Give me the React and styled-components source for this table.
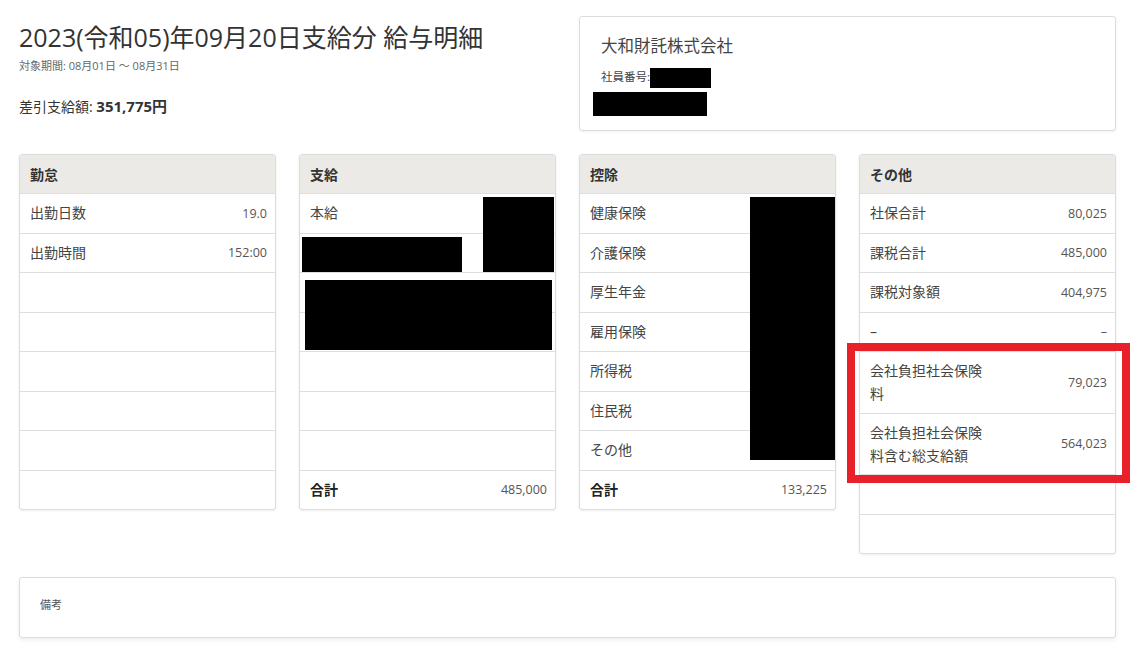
import React from 'react';
import styled, { createGlobalStyle } from 'styled-components';

const GlobalStyle = createGlobalStyle`
  body {
    margin: 0;
    background: #fff;
    font-family: "Open Sans", "Noto Sans CJK JP", sans-serif;
    color: #333;
  }
`;

const columns = [
  {
    title: '勤怠',
    rows: [
      { label: '出勤日数', value: '19.0' },
      { label: '出勤時間', value: '152:00' },
      {}, {}, {}, {}, {}, {},
    ],
  },
  {
    title: '支給',
    rows: [
      { label: '本給' },
      {}, {}, {}, {}, {}, {},
      { label: '合計', value: '485,000', total: true },
    ],
    redactions: [
      { left: 183, top: 42, width: 71, height: 75 },
      { left: 2, top: 82, width: 160, height: 35 },
      { left: 5, top: 125, width: 247, height: 70 },
    ],
  },
  {
    title: '控除',
    rows: [
      { label: '健康保険' },
      { label: '介護保険' },
      { label: '厚生年金' },
      { label: '雇用保険' },
      { label: '所得税' },
      { label: '住民税' },
      { label: 'その他' },
      { label: '合計', value: '133,225', total: true },
    ],
    redactions: [{ left: 170, top: 42, width: 85, height: 263 }],
  },
  {
    title: 'その他',
    rows: [
      { label: '社保合計', value: '80,025' },
      { label: '課税合計', value: '485,000' },
      { label: '課税対象額', value: '404,975' },
      { label: '–', value: '–' },
      { label: '会社負担社会保険料', value: '79,023', tall: true },
      { label: '会社負担社会保険料含む総支給額', value: '564,023', tall: true },
      {}, {},
    ],
    highlight: true,
  },
];

export default function App() {
  return (
    <Page>
      <GlobalStyle />
      <Top>
        <Summary>
          <Title>2023(令和05)年09月20日支給分 給与明細</Title>
          <Period>対象期間: 08月01日 〜 08月31日</Period>
          <NetPay>
            差引支給額: <strong>351,775円</strong>
          </NetPay>
        </Summary>
        <CompanyCard>
          <CompanyName>大和財託株式会社</CompanyName>
          <EmployeeNo>社員番号:</EmployeeNo>
          <Redact style={{ left: 70, top: 51, width: 61, height: 20 }} />
          <Redact style={{ left: 13, top: 75, width: 114, height: 24 }} />
        </CompanyCard>
      </Top>

      <Grid>
        {columns.map((col) => (
          <Card key={col.title}>
            <Header>{col.title}</Header>
            {col.rows.map((row, i) => (
              <Row key={i} $tall={row.tall}>
                <Label $total={row.total} $tall={row.tall}>{row.label}</Label>
                <Value>{row.value}</Value>
              </Row>
            ))}
            {(col.redactions || []).map((r, i) => (
              <Redact key={i} style={r} />
            ))}
            {col.highlight && <Highlight />}
          </Card>
        ))}
      </Grid>

      <Remarks>
        <RemarksLabel>備考</RemarksLabel>
      </Remarks>
    </Page>
  );
}

const Page = styled.div`
  width: 1135px;
  padding: 16px 19px 30px;
  box-sizing: border-box;
`;

const Top = styled.div`
  display: flex;
  align-items: flex-start;
  justify-content: space-between;
`;

const Summary = styled.div`
  padding-top: 5px;
`;

const Title = styled.h1`
  margin: 0;
  font-size: 25px;
  font-weight: 400;
  line-height: 32px;
  color: #333;
`;

const Period = styled.div`
  font-size: 11px;
  color: #666;
  line-height: 16px;
  margin-top: 5px;
`;

const NetPay = styled.div`
  margin-top: 22px;
  font-size: 14px;
  color: #333;
  line-height: 20px;
  strong {
    font-size: 15px;
    font-weight: 700;
  }
`;

const CompanyCard = styled.div`
  position: relative;
  width: 537px;
  height: 115px;
  box-sizing: border-box;
  border: 1px solid #dcdcdc;
  border-radius: 3px;
  box-shadow: 0 1px 3px rgba(0, 0, 0, 0.06);
  padding: 18px 21px;
`;

const CompanyName = styled.div`
  font-size: 16.5px;
  color: #444;
  line-height: 22px;
`;

const EmployeeNo = styled.div`
  margin-top: 12px;
  font-size: 11.5px;
  color: #444;
  line-height: 16px;
`;

const Grid = styled.div`
  display: grid;
  grid-template-columns: repeat(4, 257px);
  column-gap: 23px;
  align-items: start;
  margin-top: 23px;
`;

const Card = styled.div`
  position: relative;
  border: 1px solid #dcdcdc;
  border-radius: 3px;
  box-shadow: 0 1px 3px rgba(0, 0, 0, 0.07);
  background: #fff;
`;

const Header = styled.div`
  height: 38px;
  display: flex;
  align-items: center;
  padding: 0 10px;
  background: #ebeae7;
  font-size: 14px;
  font-weight: 700;
  color: #333;
`;

const Row = styled.div`
  display: flex;
  align-items: center;
  justify-content: space-between;
  box-sizing: border-box;
  height: ${(p) => (p.$tall ? '61.5px' : '39.5px')};
  padding: 0 8px 0 10px;
  border-top: 1px solid #dedede;
`;

const Label = styled.span`
  font-size: 14px;
  color: ${(p) => (p.$total ? '#222' : '#444')};
  font-weight: ${(p) => (p.$total ? 700 : 400)};
  max-width: ${(p) => (p.$tall ? '114px' : 'none')};
  line-height: ${(p) => (p.$tall ? '23px' : '20px')};
`;

const Value = styled.span`
  color: #555;
  font-size: 12.5px;
`;

const Redact = styled.div`
  position: absolute;
  background: #000;
`;

const Highlight = styled.div`
  position: absolute;
  left: -13px;
  top: 188px;
  width: 283px;
  height: 140px;
  box-sizing: border-box;
  border: 8px solid #e8202a;
  pointer-events: none;
`;

const Remarks = styled.div`
  margin-top: 23px;
  height: 61px;
  box-sizing: border-box;
  border: 1px solid #dcdcdc;
  border-radius: 3px;
  box-shadow: 0 2px 4px rgba(0, 0, 0, 0.07);
  padding: 18px 20px;
`;

const RemarksLabel = styled.div`
  font-size: 11px;
  color: #555;
`;
